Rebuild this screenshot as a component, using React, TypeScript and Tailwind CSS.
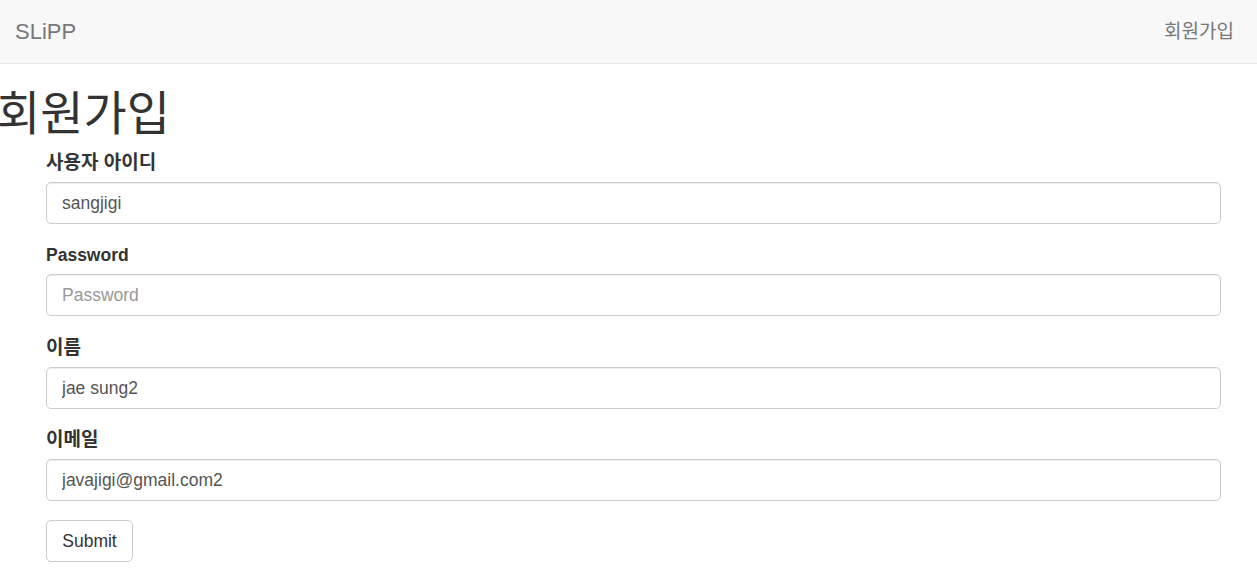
import { useState } from 'react'

const fields = [
  { label: '사용자 아이디', name: 'userId', value: 'sangjigi', placeholder: '', ko: true },
  { label: 'Password', name: 'password', value: '', placeholder: 'Password', ko: false },
  { label: '이름', name: 'name', value: 'jae sung2', placeholder: '', ko: true },
  { label: '이메일', name: 'email', value: 'javajigi@gmail.com2', placeholder: '', ko: true },
]

export default function App() {
  const [values, setValues] = useState<Record<string, string>>(
    Object.fromEntries(fields.map(f => [f.name, f.value]))
  )

  return (
    <div className="min-h-[587px] bg-white text-[#333] font-['Liberation_Sans','Noto_Sans_CJK_KR',sans-serif]">
      {/* 상단 네비게이션 */}
      <nav className="h-[64px] bg-[#f8f8f8] border-b border-[#e7e7e7] flex items-center justify-between pl-[15px] pr-[23px]">
        <a className="text-[22px] text-[#777] leading-none">SLiPP</a>
        <a className="text-[19px] text-[#777] leading-none">회원가입</a>
      </nav>

      <h1 className="-ml-[3px] mt-[24px] mb-[11px] h-[52px] text-[47px] leading-[52px] font-normal text-[#333]">회원가입</h1>

      <form className="pl-[46px] pr-[36px]" onSubmit={e => e.preventDefault()}>
        {fields.map((f, i) => (
          <div key={f.name} className={i === 1 ? 'mb-[20px]' : 'mb-[19px]'}>
            <label
              className={`block h-[24px] leading-[24px] mb-[7px] font-bold text-[#333] ${
                f.ko ? 'text-[19px]' : 'text-[17.5px]'
              }`}
            >
              {f.label}
            </label>
            <input
              type={f.name === 'password' ? 'password' : 'text'}
              value={values[f.name]}
              placeholder={f.placeholder}
              onChange={e => setValues({ ...values, [f.name]: e.target.value })}
              className="block w-full h-[42px] px-[15px] text-[17.5px] text-[#555] bg-white border border-[#ccc] rounded-[5px] shadow-[inset_0_1px_1px_rgba(0,0,0,0.075)] outline-none placeholder:text-[#999]"
            />
          </div>
        ))}
        <button
          type="submit"
          className="h-[42px] w-[87px] text-[17.5px] text-[#333] bg-white border border-[#ccc] rounded-[5px]"
        >
          Submit
        </button>
      </form>
    </div>
  )
}
